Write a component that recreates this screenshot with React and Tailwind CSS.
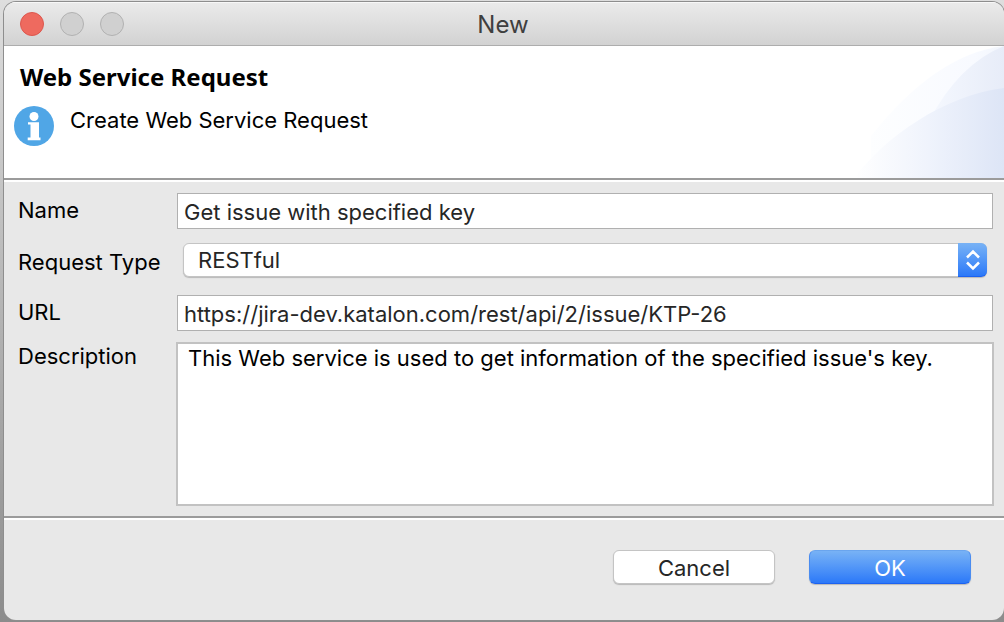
import React from "react";

const light = "h-6 w-6 rounded-full border";
const field =
  "w-full h-9 border border-[#b0b0b0] bg-white px-1.5 pt-0.5 text-[22px] text-[#262626] outline-none";

function InfoIcon() {
  return (
    <svg viewBox="0 0 40 40" className="h-10 w-10 shrink-0" aria-hidden="true">
      <circle cx="20" cy="20" r="20" fill="#50a6e6" />
      <circle cx="20" cy="10.5" r="4.5" fill="#fff" />
      <path d="M14 16.300H25V31.500H26.500V34.300H13.700V31.500H16.500V18.500H14Z" fill="#fff" />
    </svg>
  );
}

function Swoosh() {
  return (
    <svg viewBox="0 0 150 132" className="h-[132px] w-[150px] shrink-0" aria-hidden="true">
      <defs>
        <linearGradient id="outer" x1="0" x2="150" y1="0" y2="0" gradientUnits="userSpaceOnUse">
          <stop offset="0.1" stopColor="#fdfeff" />
          <stop offset="0.8" stopColor="#f8faff" />
          <stop offset="1" stopColor="#f2f6fd" />
        </linearGradient>
        <linearGradient id="middle" x1="70" x2="150" y1="0" y2="0" gradientUnits="userSpaceOnUse">
          <stop offset="0" stopColor="#f6f9ff" />
          <stop offset="1" stopColor="#e7ecf8" />
        </linearGradient>
        <linearGradient id="inner" x1="0" x2="150" y1="0" y2="0" gradientUnits="userSpaceOnUse">
          <stop offset="0" stopColor="#ffffff" />
          <stop offset="0.5" stopColor="#eff3fc" />
          <stop offset="1" stopColor="#dde5f6" />
        </linearGradient>
      </defs>
      <path d="M17 132V90Q82 8 150 0V132Z" fill="url(#outer)" />
      <path d="M75 75Q105 18 150 0V132H60Z" fill="url(#middle)" />
      <path d="M0 132C30 92 90 49 150 42V132Z" fill="url(#inner)" />
    </svg>
  );
}

export default function App() {
  return (
    <div className="flex min-h-screen flex-col bg-gradient-to-b from-[#dedede] via-[#b4b4b4] to-[#8c8c8c] pt-0.5 pb-0.5 pl-1 font-['Inter','Liberation_Sans',sans-serif] text-[22px] leading-7 text-black">
      <main className="flex flex-1 flex-col overflow-hidden rounded-xl bg-[#e8e8e8] shadow-[0_0_0_1px_#8e8e8e]">
        <header className="flex h-11 items-center border-b border-[#adadad] bg-gradient-to-b from-[#ebebeb] to-[#d2d2d2] px-4 shadow-[inset_0_1px_0_#f8f8f8]">
          <div className="flex gap-4">
            <button type="button" aria-label="Close" className={light + " border-[#dc574e] bg-[#ee6a5f]"} />
            <button type="button" aria-label="Minimize" className={light + " border-[#b1b1b1] bg-[#d0d0d0]"} />
            <button type="button" aria-label="Zoom" className={light + " border-[#b1b1b1] bg-[#d0d0d0]"} />
          </div>
          <span className="flex-1 pt-0.5 pr-[106px] text-center text-2xl text-[#3f3f3f]">New</span>
        </header>

        <section className="flex justify-between border-b-2 border-[#9b9b9b] bg-white">
          <div className="pt-[15px] pl-2.5">
            <h1 className="pl-1.5 font-['Noto_Sans','Open_Sans',sans-serif] text-2xl leading-8 font-bold">
              Web Service Request
            </h1>
            <div className="mt-[13px] flex gap-4">
              <InfoIcon />
              <p>Create Web Service Request</p>
            </div>
          </div>
          <Swoosh />
        </section>

        <form className="flex flex-1 flex-col" onSubmit={(e) => e.preventDefault()}>
          <div className="flex flex-1 flex-col border-t-2 border-b-2 border-t-white border-b-[#9b9b9b] pt-[11px] pr-2.5 pb-2.5 pl-3.5">
            <div className="flex">
              <label htmlFor="name" className="w-[158px] shrink-0 pt-[3px]">Name</label>
              <div className="flex-1 px-px">
                <input id="name" type="text" defaultValue="Get issue with specified key" className={field} />
              </div>
            </div>
            <div className="mt-3.5 flex">
              <label htmlFor="type" className="w-[158px] shrink-0 pt-[5px]">Request Type</label>
              <div className="relative mx-[7px] h-[34px] flex-1">
                <select
                  id="type"
                  className="h-full w-full appearance-none rounded-md border border-[#c4c4c4] bg-white pl-3.5 text-[22px] text-[#262626] shadow-[0_1px_1px_#b8b8b8] outline-none"
                >
                  <option>RESTful</option>
                </select>
                <span className="pointer-events-none absolute inset-y-0 right-0 flex w-[29px] items-center justify-center rounded-r-md border-b border-[#1c62f0] bg-gradient-to-b from-[#78b2f5] to-[#2b78f8]">
                  <svg viewBox="0 0 16 22" className="h-[22px] w-4" fill="none" stroke="#fff" strokeWidth="2.500" aria-hidden="true">
                    <path d="M2 8.500L8 2.500L14 8.500M2 13.500L8 19.500L14 13.500" />
                  </svg>
                </span>
              </div>
            </div>
            <div className="mt-[18px] flex">
              <label htmlFor="url" className="w-[158px] shrink-0 pt-[3px]">URL</label>
              <div className="flex-1 px-px">
                <input id="url" type="text" defaultValue="https://jira-dev.katalon.com/rest/api/2/issue/KTP-26" className={field} />
              </div>
            </div>
            <div className="mt-[11px] flex flex-1">
              <label htmlFor="description" className="w-[158px] shrink-0">Description</label>
              <textarea
                id="description"
                defaultValue="This Web service is used to get information of the specified issue's key."
                className="min-h-32 flex-1 resize-none border-2 border-[#c2c2c2] bg-white px-2.5 text-[22px] leading-7 outline-none"
              />
            </div>
          </div>

          <footer className="flex h-[102px] justify-end gap-[34px] border-t-2 border-white pt-[30px] pr-[33px]">
            <button type="button" className="h-[34px] w-[162px] rounded-md border border-[#c4c4c4] bg-white pt-0.5 text-[#262626] shadow-[0_1px_1px_#b8b8b8]">
              Cancel
            </button>
            <button type="submit" className="h-[34px] w-[162px] rounded-md border border-t-[#6aa5ee] border-x-[#4a8cf0] border-b-[#1c62f0] bg-gradient-to-b from-[#78b2f5] to-[#2b78f8] pt-0.5 text-white shadow-[0_1px_1px_#b8b8b8]">
              OK
            </button>
          </footer>
        </form>
      </main>
    </div>
  );
}
